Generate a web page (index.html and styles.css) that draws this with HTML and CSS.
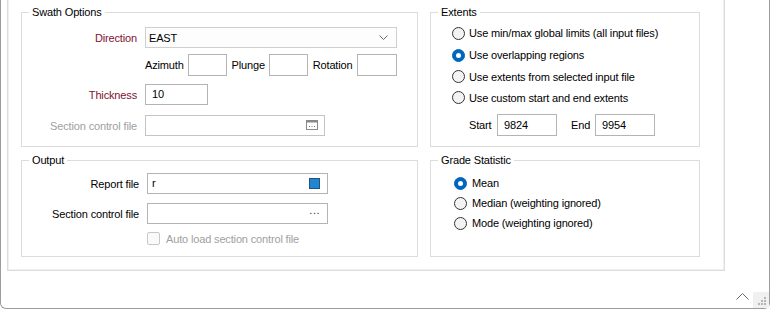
FILE: index.html
```html
<!DOCTYPE html>
<html>
<head>
<meta charset="utf-8">
<link rel="stylesheet" href="styles.css">
</head>
<body>
<div class="window">
  <div class="panel">
    <div class="col col-left">
      <div class="group group-swath">
        <span class="group-title">Swath Options</span>
        <div class="frow">
          <span class="lbl req">Direction</span>
          <div class="combo"><span>EAST</span>
            <svg class="chev" width="9" height="5" viewBox="0 0 9 5"><path d="M0.5 0.5 L4.5 4.5 L8.5 0.5" fill="none" stroke="#666" stroke-width="1"/></svg>
          </div>
        </div>
        <div class="frow frow-angles">
          <span></span>
          <div class="angles">
            <span>Azimuth</span><div class="box box-sm"></div>
            <span>Plunge</span><div class="box box-sm"></div>
            <span>Rotation</span><div class="box box-sm box-rot"></div>
          </div>
        </div>
        <div class="frow frow-thick">
          <span class="lbl req">Thickness</span>
          <div class="box box-thick">10</div>
        </div>
        <div class="frow frow-sec">
          <span class="lbl dis">Section control file</span>
          <div class="box box-file box-dis">
            <svg class="browse" width="12" height="10" viewBox="0 0 12 10"><rect x="0.5" y="0.5" width="11" height="9" fill="#fff" stroke="#8a8a8a"/><rect x="0.5" y="0.5" width="11" height="2" fill="#8a8a8a"/><rect x="3" y="6" width="1" height="1" fill="#7a7a7a"/><rect x="5.5" y="6" width="1" height="1" fill="#7a7a7a"/><rect x="8" y="6" width="1" height="1" fill="#7a7a7a"/></svg>
          </div>
        </div>
      </div>
      <div class="group group-output">
        <span class="group-title">Output</span>
        <div class="orow">
          <span class="lbl">Report file</span>
          <div class="box box-file2">r<span class="bluesq"></span></div>
        </div>
        <div class="orow orow-sec">
          <span class="lbl">Section control file</span>
          <div class="box box-file2"><span class="dots">...</span></div>
        </div>
        <div class="orow orow-chk">
          <span></span>
          <label class="chk"><span class="chkbox"></span><span class="dis">Auto load section control file</span></label>
        </div>
      </div>
    </div>
    <div class="col col-right">
      <div class="group group-extents">
        <span class="group-title">Extents</span>
        <div class="radio-row r1"><span class="radio"></span><span>Use min/max global limits (all input files)</span></div>
        <div class="radio-row r2"><span class="radio on"></span><span>Use overlapping regions</span></div>
        <div class="radio-row r3"><span class="radio"></span><span>Use extents from selected input file</span></div>
        <div class="radio-row r4"><span class="radio"></span><span>Use custom start and end extents</span></div>
        <div class="range">
          <span class="rl-start">Start</span><div class="box box-num">9824</div>
          <span class="rl-end">End</span><div class="box box-num">9954</div>
        </div>
      </div>
      <div class="group group-grade">
        <span class="group-title">Grade Statistic</span>
        <div class="radio-row g"><span class="radio on"></span><span>Mean</span></div>
        <div class="radio-row g"><span class="radio"></span><span>Median (weighting ignored)</span></div>
        <div class="radio-row g"><span class="radio"></span><span>Mode (weighting ignored)</span></div>
      </div>
    </div>
  </div>
  <div class="statusbar">
    <svg class="up" width="13" height="8" viewBox="0 0 13 8"><path d="M0.5 7.5 L6.5 1.5 L12.5 7.5" fill="none" stroke="#6a6a6a" stroke-width="1"/></svg>
    <div class="grip">
      <svg width="16" height="16" viewBox="0 0 16 16"><g fill="#b5b5b5"><rect x="11" y="5" width="2" height="2"/><rect x="8" y="8" width="2" height="2"/><rect x="11" y="8" width="2" height="2"/><rect x="5" y="11" width="2" height="2"/><rect x="8" y="11" width="2" height="2"/><rect x="11" y="11" width="2" height="2"/></g></svg>
    </div>
  </div>
</div>
</body>
</html>
```

FILE: styles.css
```css
* { box-sizing: border-box; }
html, body { margin: 0; padding: 0; background: #fff; }
body {
  font-family: "Liberation Sans", Arial, sans-serif;
  font-size: 11px;
  letter-spacing: -0.15px;
  color: #000;
  width: 770px;
  height: 309px;
  overflow: hidden;
}
.window {
  width: 770px;
  height: 309px;
  border: 1px solid #9c9c9c;
  border-top: none;
  border-radius: 0 0 6px 6px;
  display: flex;
  flex-direction: column;
}
.panel {
  margin-left: 6px;
  width: 718px;
  height: 271px;
  border: 1px solid #dcdcdc;
  border-top: none;
  box-shadow: inset 1px 0 0 #f0f0f0, inset -1px 0 0 #f0f0f0, inset 0 -1px 0 #f0f0f0;
  display: flex;
  gap: 12px;
  padding: 12px 0 0 13px;
}
.col { display: flex; flex-direction: column; gap: 13px; }
.col-left { width: 397px; }
.col-right { width: 270px; }
.group {
  position: relative;
  border: 1px solid #dcdcdc;
}
.group-swath, .group-extents { height: 135px; }
.group-output, .group-grade { height: 97px; }
.group-title {
  position: absolute;
  top: -8px;
  left: 7px;
  padding: 0 3px;
  background: #fff;
  line-height: 15px;
  white-space: nowrap;
}
.lbl { text-align: right; white-space: nowrap; }
.req { color: #7d1230; }
.dis { color: #a0a0a0; }
.box {
  height: 21px;
  border: 1px solid #b4b4b4;
  background: #fff;
  padding: 0 0 0 7px;
  line-height: 19px;
  position: relative;
}
.frow {
  display: grid;
  grid-template-columns: 115px 252px;
  column-gap: 8px;
  align-items: center;
  height: 21px;
}
.group-swath { padding-top: 14px; }
.frow-angles { margin-top: 6px; height: 22px; }
.frow-thick { margin-top: 8px; }
.frow-sec { margin-top: 10px; }
.combo {
  height: 21px;
  border: 1px solid #cfcfcf;
  background: #fdfdfd;
  display: flex;
  align-items: center;
  justify-content: space-between;
  padding: 0 8px 0 3px;
}
.angles {
  display: flex;
  align-items: center;
  justify-content: space-between;
}
.box-sm { width: 39px; height: 22px; }
.box-rot { width: 40px; }
.box-thick { width: 63px; padding-left: 6px; }
.box-file { width: 180px; border-color: #c4c4c4; }
.browse { position: absolute; right: 6px; top: 4px; }
.group-output { padding-top: 12px; }
.orow {
  display: grid;
  grid-template-columns: 117px 181px;
  column-gap: 8px;
  align-items: center;
  height: 21px;
}
.orow-sec { margin-top: 9px; }
.orow-chk { margin-top: 6px; height: 17px; }
.box-file2 { width: 181px; padding-left: 4px; }
.bluesq {
  position: absolute;
  right: 7px;
  top: 4px;
  width: 11px;
  height: 11px;
  background: #1f87d1;
  border: 1px solid #27507a;
}
.dots {
  position: absolute;
  right: 7px;
  top: -3px;
  letter-spacing: 0.5px;
  color: #333;
}
.chk { display: flex; align-items: center; gap: 6px; white-space: nowrap; }
.chkbox {
  width: 13px;
  height: 13px;
  border: 1px solid #c8c8c8;
  border-radius: 2px;
  background: #fafafa;
}
.radio-row {
  display: flex;
  align-items: center;
  gap: 4px;
  height: 21px;
  white-space: nowrap;
}
.group-extents { padding: 9px 0 0 21px; }
.r1, .r2 { height: 22px; }
.radio {
  width: 13px;
  height: 13px;
  border: 1px solid #333;
  border-radius: 50%;
  background: #f3f3f3;
  position: relative;
  flex: none;
}
.radio.on {
  background: #0067c0;
  border-color: #0067c0;
}
.radio.on::after {
  content: "";
  position: absolute;
  left: 3px;
  top: 3px;
  width: 5px;
  height: 5px;
  border-radius: 50%;
  background: #fff;
}
.range {
  display: flex;
  align-items: center;
  margin-top: 6px;
  padding-left: 17px;
}
.box-num { width: 60px; height: 22px; padding-left: 6px; line-height: 20px; }
.rl-start { width: 28px; }
.rl-end { margin-left: 14px; width: 24px; }
.group-grade { padding: 12px 0 0 23px; }
.radio-row.g { height: 20px; gap: 5px; }
.statusbar {
  flex: 1;
  display: flex;
  justify-content: flex-end;
  align-items: flex-end;
  padding-bottom: 1px;
}
.up { margin: 0 4px 7px 0; }
.grip {
  width: 16px;
  height: 16px;
  background: #f0f0f0;
  margin-bottom: -1px;
}
.grip svg { display: block; }
```
